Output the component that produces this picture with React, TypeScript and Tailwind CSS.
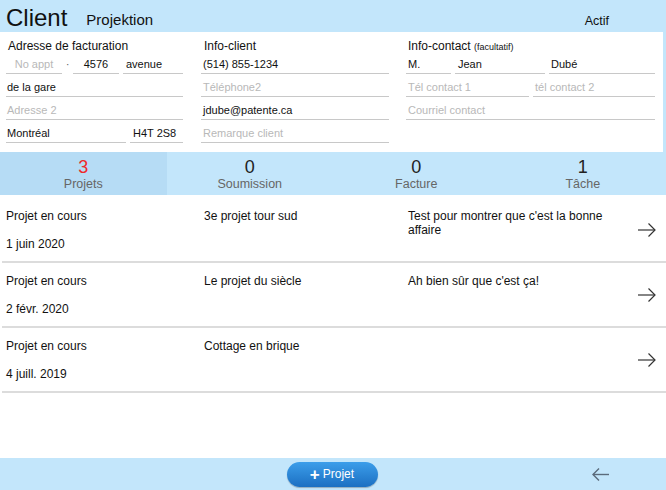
import React from "react";

type Field = { value?: string; placeholder?: string; className?: string; center?: boolean };

function Input({ value, placeholder, className = "", center }: Field) {
  return (
    <div
      className={`flex h-[19px] items-end border-b border-[#c8c8c8] pb-[2px] text-[11px] leading-[14px] ${
        center ? "justify-center" : "pl-[1px]"
      } ${className}`}
    >
      {value ? <span className="text-[#111]">{value}</span> : <span className="text-[#b8b8b8]">{placeholder}</span>}
    </div>
  );
}

function Row({ children, className = "" }: { children: React.ReactNode; className?: string }) {
  return <div className={`flex items-end gap-[4px] ${className}`}>{children}</div>;
}

function ArrowRight() {
  return (
    <svg width="18" height="14" viewBox="0 0 18 14" fill="none" stroke="#333" strokeWidth="1.2">
      <path d="M0 7H17" />
      <path d="M10.5 0.5L17 7L10.5 13.5" />
    </svg>
  );
}

function ArrowLeft() {
  return (
    <svg width="17" height="13" viewBox="0 0 17 13" fill="none" stroke="#5b6b7b" strokeWidth="1.4">
      <path d="M1 6.5H17" />
      <path d="M7 0.5L1 6.5L7 12.5" />
    </svg>
  );
}

const tabs = [
  { count: "3", label: "Projets", active: true },
  { count: "0", label: "Soumission" },
  { count: "0", label: "Facture" },
  { count: "1", label: "Tâche" },
];

const projects = [
  { status: "Projet en cours", date: "1 juin 2020", name: "3e projet tour sud", note: "Test pour montrer que c'est la bonne affaire" },
  { status: "Projet en cours", date: "2 févr. 2020", name: "Le projet du siècle", note: "Ah bien sûr que c'est ça!" },
  { status: "Projet en cours", date: "4 juill. 2019", name: "Cottage en brique", note: "" },
];

export default function App() {
  return (
    <div
      className="flex h-[490px] w-[666px] flex-col overflow-hidden bg-white text-[#111]"
      style={{ fontFamily: '"Liberation Sans", Arial, sans-serif' }}
    >
      {/* header */}
      <div className="flex h-[32px] items-end bg-[#c3e6fb]">
        <span className="ml-[6px] text-[24px] leading-[28px]">Client</span>
        <span className="ml-[19px] mb-[3px] text-[15px] leading-[18px]">Projektion</span>
        <span className="ml-auto mr-[57px] mb-[3px] text-[12.5px] leading-[16px]">Actif</span>
      </div>

      {/* form */}
      <div className="flex h-[120px] border-r-[3px] border-[#c3e6fb] pt-[6px]">
        <div className="ml-[6px] flex w-[177px] flex-col gap-[4px]">
          <div className="-mb-[3px] h-[16px] pl-[2px] text-[12px] leading-[16px]">Adresse de facturation</div>
          <Row>
            <Input placeholder="No appt" center className="w-[56px]" />
            <span className="w-[3px] pb-[4px] text-[10px] leading-[10px] text-[#555]">·</span>
            <Input value="4576" center className="w-[46px]" />
            <Input value="avenue" className="flex-1 pl-[3px]" />
          </Row>
          <Input value="de la gare" />
          <Input placeholder="Adresse 2" />
          <Row>
            <Input value="Montréal" className="w-[120px]" />
            <Input value="H4T 2S8" className="flex-1 pl-[3px]" />
          </Row>
        </div>

        <div className="ml-[18px] flex w-[188px] flex-col gap-[4px]">
          <div className="-mb-[3px] h-[16px] pl-[3px] text-[12px] leading-[16px]">Info-client</div>
          <Input value="(514) 855-1234" className="pl-[2px]" />
          <Input placeholder="Téléphone2" className="pl-[2px]" />
          <Input value="jdube@patente.ca" className="pl-[2px]" />
          <Input placeholder="Remarque client" className="pl-[2px]" />
        </div>

        <div className="ml-[17px] flex w-[249px] flex-col gap-[4px]">
          <div className="-mb-[3px] h-[16px] pl-[2px] text-[12px] leading-[16px]">
            Info-contact <span className="text-[9px]">(facultatif)</span>
          </div>
          <Row>
            <Input value="M." className="w-[45px] pl-[2px]" />
            <Input value="Jean" className="w-[90px] pl-[3px]" />
            <Input value="Dubé" className="flex-1 pl-[2px]" />
          </Row>
          <Row>
            <Input placeholder="Tél contact 1" className="w-[123px] pl-[2px]" />
            <Input placeholder="tél contact 2" className="flex-1 pl-[2px]" />
          </Row>
          <Input placeholder="Courriel contact" className="pl-[2px]" />
        </div>
      </div>

      {/* tabs */}
      <div className="grid h-[43px] grid-cols-4 bg-[#c3e6fb]">
        {tabs.map((tab) => (
          <div
            key={tab.label}
            className={`flex flex-col items-center pt-[6px] ${tab.active ? "bg-[#b6dcf5]" : ""}`}
          >
            <span className={`text-[18px] leading-[18px] ${tab.active ? "text-[#ee2a2a]" : "text-[#222]"}`}>
              {tab.count}
            </span>
            <span className="mt-[1px] text-[12.5px] leading-[15px] text-[#666]">{tab.label}</span>
          </div>
        ))}
      </div>

      {/* list */}
      <div className="flex flex-1 flex-col pt-[3px]">
        {projects.map((p, i) => (
          <div
            key={i}
            className="ml-[2px] flex h-[65px] border-b-2 border-[#dcdcdc] text-[12px] leading-[14px]"
          >
            <div className="flex w-[202px] flex-col pl-[4px] pt-[11px]">
              <span>{p.status}</span>
              <span className="mt-[14px]">{p.date}</span>
            </div>
            <div className="w-[204px] pt-[11px]">{p.name}</div>
            <div className="w-[226px] pt-[11px]">{p.note}</div>
            <div className="flex flex-1 items-center justify-center pr-[6px]">
              <ArrowRight />
            </div>
          </div>
        ))}
      </div>

      {/* footer */}
      <div className="relative flex h-[32px] items-center justify-center bg-[#c3e6fb]">
        <button
          type="button"
          className="ml-[-2px] flex h-[25px] w-[91px] items-center justify-center gap-[3px] rounded-full bg-gradient-to-b from-[#3c9eea] to-[#1b6fc2] text-[12px] text-white shadow-[0_1px_1px_rgba(0,0,0,0.25)]"
        >
          <span className="text-[17px] font-bold leading-[17px]">+</span>
          <span>Projet</span>
        </button>
        <div className="absolute right-[57px] top-[10px]">
          <ArrowLeft />
        </div>
      </div>
    </div>
  );
}
